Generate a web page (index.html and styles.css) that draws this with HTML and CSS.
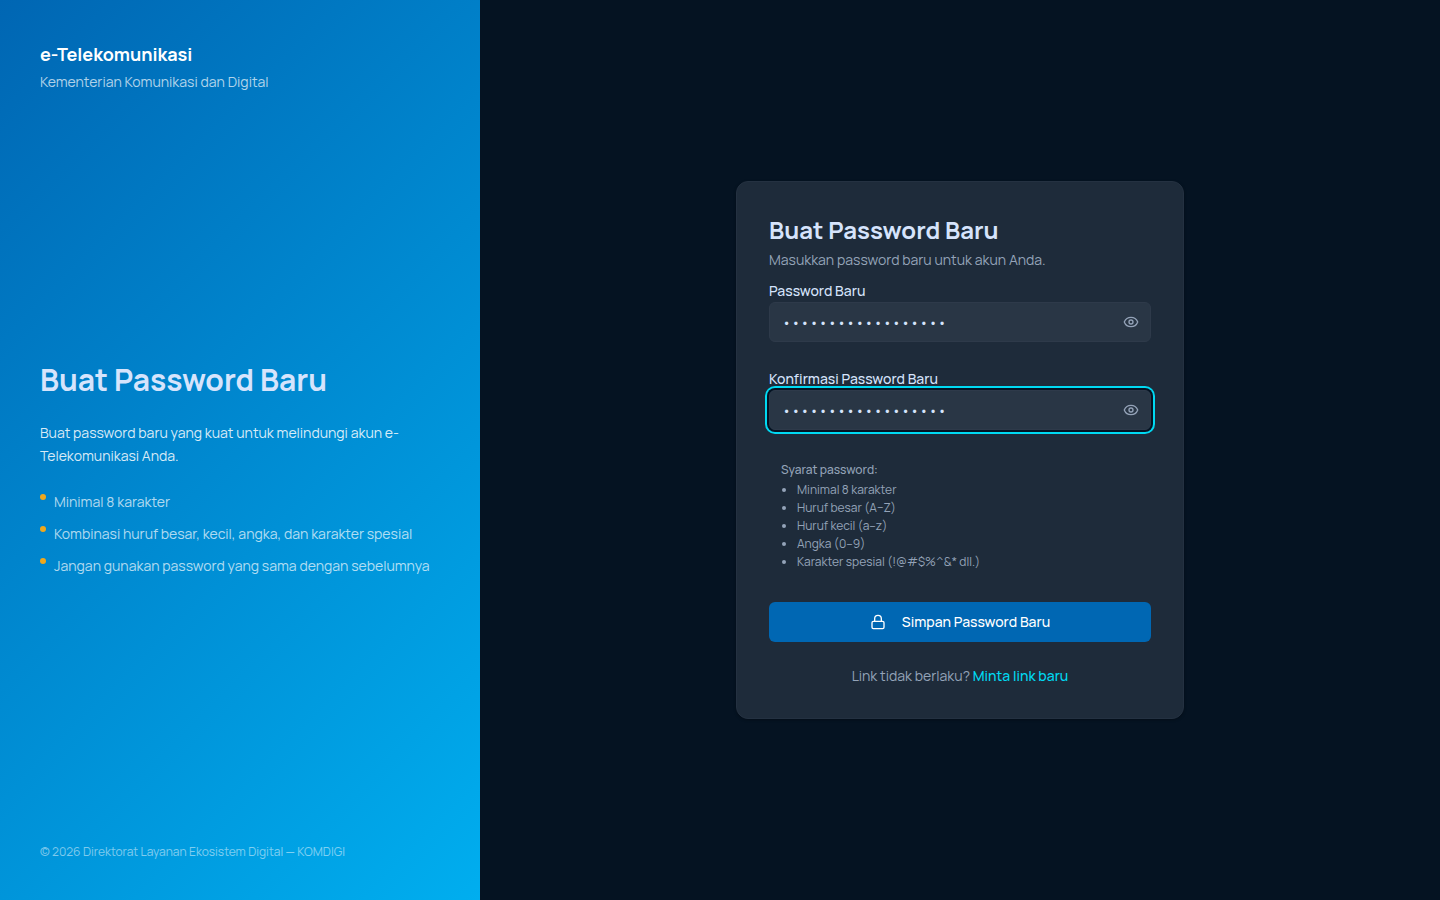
FILE: index.html
```
<!DOCTYPE html>
<html lang="id">
<head>
    <meta charset="UTF-8">
    <meta name="viewport" content="width=device-width, initial-scale=1.0">
    <title>Buat Password Baru - e-Telekomunikasi</title>
    <link rel="stylesheet" href="styles.css">
</head>
<body>

<div class="auth-page">

    <aside class="brand-panel">
        <div class="brand">
            <p class="brand-name">e-Telekomunikasi</p>
            <p class="brand-sub">Kementerian Komunikasi dan Digital</p>
        </div>

        <div class="intro">
            <h2>Buat Password Baru</h2>
            <p class="intro-text">Buat password baru yang kuat untuk melindungi akun e-Telekomunikasi Anda.</p>
            <ul class="intro-list">
                <li>Minimal 8 karakter</li>
                <li>Kombinasi huruf besar, kecil, angka, dan karakter spesial</li>
                <li>Jangan gunakan password yang sama dengan sebelumnya</li>
            </ul>
        </div>

        <p class="copyright">© 2026 Direktorat Layanan Ekosistem Digital — KOMDIGI</p>
    </aside>

    <main class="form-panel">
        <div class="card">
            <h1>Buat Password Baru</h1>
            <p class="card-sub">Masukkan password baru untuk akun Anda.</p>

            <form id="resetForm">
                <div class="field">
                    <label for="password">Password Baru</label>
                    <div class="input-wrap">
                        <input type="password" id="password" name="password" value="PasswordBaru#2026x" required>
                        <button type="button" class="toggle" aria-label="Tampilkan password" onclick="togglePassword('password')">
                            <svg viewBox="0 0 24 24"><path d="M2.06 12.35a1 1 0 0 1 0-.7 10.75 10.75 0 0 1 19.88 0 1 1 0 0 1 0 .7 10.75 10.75 0 0 1-19.88 0"/><circle cx="12" cy="12" r="3"/></svg>
                        </button>
                    </div>
                </div>

                <div class="field">
                    <label for="confirm">Konfirmasi Password Baru</label>
                    <div class="input-wrap">
                        <input type="password" id="confirm" name="confirm" class="focused" value="PasswordBaru#2026x" required>
                        <button type="button" class="toggle" aria-label="Tampilkan password" onclick="togglePassword('confirm')">
                            <svg viewBox="0 0 24 24"><path d="M2.06 12.35a1 1 0 0 1 0-.7 10.75 10.75 0 0 1 19.88 0 1 1 0 0 1 0 .7 10.75 10.75 0 0 1-19.88 0"/><circle cx="12" cy="12" r="3"/></svg>
                        </button>
                    </div>
                </div>

                <div class="rules">
                    <p>Syarat password:</p>
                    <ul>
                        <li>Minimal 8 karakter</li>
                        <li>Huruf besar (A–Z)</li>
                        <li>Huruf kecil (a–z)</li>
                        <li>Angka (0–9)</li>
                        <li>Karakter spesial (!@#$%^&amp;* dll.)</li>
                    </ul>
                </div>

                <button type="submit" class="submit">
                    <svg viewBox="0 0 24 24"><rect x="3" y="11" width="18" height="11" rx="2"/><path d="M7 11V7a5 5 0 0 1 10 0v4"/></svg>
                    Simpan Password Baru
                </button>
            </form>

            <p class="card-footer">Link tidak berlaku? <a href="#">Minta link baru</a></p>
        </div>
    </main>

</div>

<script>
    // Show or hide the password text
    function togglePassword(id) {
        const input = document.getElementById(id);
        input.type = input.type === 'password' ? 'text' : 'password';
    }
</script>

</body>
</html>
```
FILE: styles.css
```
* {
    box-sizing: border-box;
}

body {
    margin: 0;
    font-family: Manrope, Inter, sans-serif;
    font-size: 14px;
    line-height: 20px;
    color: #d6e4fc;
    background-color: #051322;
}

h1, h2, p, ul {
    margin: 0;
    padding: 0;
}

.auth-page {
    display: grid;
    grid-template-columns: 1fr 2fr;
    min-height: 100vh;
}

/* Left panel */
.brand-panel {
    display: flex;
    flex-direction: column;
    justify-content: space-between;
    padding: 40px 40px 39px;
    background: linear-gradient(135deg, #0066b3, #00aeef);
}

.brand-name {
    font-size: 18px;
    line-height: 28px;
    font-weight: 700;
    color: #fff;
}

.brand-sub {
    margin-top: 4px;
    color: rgba(255, 255, 255, 0.7);
}

.intro {
    padding-top: 2px;
}

.intro h2 {
    font-size: 30px;
    line-height: 40px;
    font-weight: 700;
}

.intro-text {
    margin-top: 21px;
    line-height: 23px;
    color: rgba(255, 255, 255, 0.85);
}

.intro-list {
    display: flex;
    flex-direction: column;
    gap: 10px;
    margin-top: 24px;
    line-height: 22px;
    list-style: none;
    color: rgba(255, 255, 255, 0.7);
}

.intro-list li {
    display: flex;
    gap: 8px;
}

.intro-list li::before {
    content: "";
    flex: none;
    width: 6px;
    height: 6px;
    margin-top: 3px;
    border-radius: 50%;
    background-color: #f0a81c;
}

.copyright {
    font-size: 12px;
    line-height: 18px;
    color: rgba(255, 255, 255, 0.5);
}

/* Form */
.form-panel {
    display: flex;
    align-items: center;
    justify-content: center;
    padding: 24px;
}

.card {
    width: 100%;
    max-width: 448px;
    padding: 32px;
    background-color: #1e2b3a;
    border: 1px solid #243141;
    border-radius: 12px;
    box-shadow: 0 1px 3px rgba(0, 0, 0, 0.3);
}

.card h1 {
    font-size: 24px;
    line-height: 32px;
    font-weight: 700;
}

.card-sub {
    margin-top: 4px;
    margin-bottom: 10px;
    color: #94a3b8;
}

.field {
    margin-bottom: 26px;
}

.field label {
    display: block;
    line-height: 22px;
    font-weight: 500;
}

.input-wrap {
    position: relative;
}

input {
    display: block;
    width: 100%;
    height: 40px;
    padding: 0 40px 0 12px;
    font-family: inherit;
    font-size: 14px;
    color: #d6e4fc;
    background-color: #293645;
    border: 1px solid #2e3a4a;
    border-radius: 6px;
    outline: none;
}

input:focus,
input.focused {
    box-shadow: 0 0 0 2px #051322, 0 0 0 4px #00d9f2;
}

button {
    padding: 0;
    border: none;
    font: inherit;
    cursor: pointer;
}

svg {
    width: 16px;
    height: 16px;
    fill: none;
    stroke: currentColor;
    stroke-width: 2;
    stroke-linecap: round;
    stroke-linejoin: round;
}

.toggle {
    position: absolute;
    top: 0;
    right: 0;
    display: flex;
    align-items: center;
    justify-content: center;
    width: 40px;
    height: 40px;
    background: none;
    color: #94a3b8;
}

.rules {
    padding: 5px 12px 4px;
    margin-bottom: 27px;
    font-size: 12px;
    line-height: 18px;
    color: #94a3b8;
}

.rules p {
    margin-bottom: 2px;
    font-weight: 500;
}

.rules ul {
    padding-left: 16px;
}

.submit {
    display: flex;
    align-items: center;
    justify-content: center;
    gap: 16px;
    width: 100%;
    height: 40px;
    border-radius: 6px;
    background-color: #0067b3;
    color: #fff;
    font-weight: 500;
}

.card-footer {
    margin-top: 24px;
    text-align: center;
    color: #94a3b8;
}

.card-footer a {
    color: #00d9f2;
    font-weight: 500;
    text-decoration: none;
}
```
